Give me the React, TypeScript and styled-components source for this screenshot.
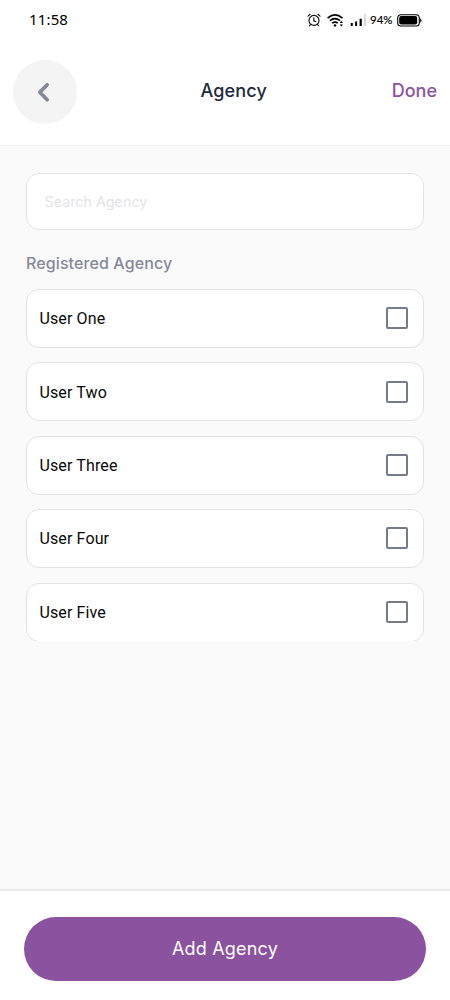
import React, { useState } from 'react';
import styled, { createGlobalStyle } from 'styled-components';

const GlobalStyle = createGlobalStyle`
  *, *::before, *::after { box-sizing: border-box; }
  body { margin: 0; background: #fff; }
  button, input { font: inherit; }
`;

const Screen = styled.div`
  width: 450px;
  height: 1000px;
  display: flex;
  flex-direction: column;
  background: #fff;
  overflow: hidden;
  font-family: Inter, sans-serif;
`;

const StatusBar = styled.div`
  height: 40px;
  flex: none;
  display: flex;
  align-items: center;
  justify-content: space-between;
  padding: 0 28px 0 29px;
  color: #000;
`;

const Clock = styled.span`
  font: 400 15px/20px 'Noto Sans', sans-serif;
  letter-spacing: 0.15px;
  margin-top: -2px;
`;

const StatusIcons = styled.div`
  display: flex;
  align-items: center;
  gap: 5px;
  svg { display: block; }
`;

const BatteryLevel = styled.span`
  font: 400 11.5px/16px Lato, sans-serif;
  width: 24px;
  margin: 0 -2px 0 -2px;
  -webkit-text-stroke: 0.15px #000;
  white-space: nowrap;
`;

const Header = styled.header`
  height: 106px;
  flex: none;
  display: grid;
  grid-template-columns: 1fr auto 1fr;
  padding: 20px 13px 0 13px;
  border-bottom: 1px solid #f3f3f3;
`;

const BackButton = styled.button`
  width: 64px;
  height: 64px;
  padding: 0;
  border: 0;
  border-radius: 50%;
  background: #f4f4f4;
  svg { display: block; }
`;

const Title = styled.h1`
  margin: 17px 0 0;
  padding-left: 17px;
  width: 84px;
  margin-right: -1px;
  white-space: nowrap;
  font-size: 18px;
  line-height: 28px;
  font-weight: 500;
  letter-spacing: 0.15px;
  color: #20293a;
`;

const DoneButton = styled.button`
  justify-self: end;
  align-self: start;
  margin-top: 17px;
  padding: 0;
  border: 0;
  background: none;
  font-size: 18px;
  line-height: 28px;
  font-weight: 500;
  color: #8e529f;
`;

const Content = styled.main`
  flex: 1;
  min-height: 0;
  background: #fafafa;
  padding: 27px 26px 0;
`;

const SearchField = styled.input`
  display: block;
  width: 398px;
  height: 57px;
  padding: 0 18px 1px 17.5px;
  border: 1px solid #e3e3e6;
  border-radius: 13px;
  background: #fff;
  outline: none;
  font-size: 14.3px;
  &::placeholder { color: #e4e4e6; opacity: 1; }
`;

const SectionTitle = styled.h2`
  margin: 21px 0 14px;
  font-size: 16px;
  line-height: 24px;
  font-weight: 500;
  letter-spacing: 0.1px;
  color: #85899a;
`;

const AgencyList = styled.div`
  width: 398px;
  height: 352px;
  display: flex;
  flex-direction: column;
  gap: 14.4px;
  overflow: hidden;
`;

const AgencyRow = styled.label`
  flex: none;
  height: 59px;
  display: flex;
  align-items: center;
  justify-content: space-between;
  padding: 0 15px 0 12.5px;
  border: 1px solid #e3e3e6;
  border-radius: 13px;
  background: #fff;
  font: 400 16px/24px Roboto, sans-serif;
  letter-spacing: 0.12px;
  color: #080808;
`;

const AgencyName = styled.span`
  padding-top: 1.4px;
`;

const Checkbox = styled.input`
  appearance: none;
  width: 22px;
  height: 22px;
  margin: 0 0 0.4px;
  border: 2px solid #747b8b;
  border-radius: 2px;
  &:checked { background: #8e529f; }
`;

const Footer = styled.footer`
  flex: none;
  height: 111px;
  border-top: 2px solid #ebebeb;
  padding: 26px 24px 0;
`;

const AddButton = styled.button`
  display: block;
  width: 402px;
  height: 64px;
  border: 0;
  padding: 0 0 2px;
  border-radius: 32px;
  background: #8b529f;
  color: #fff;
  font-size: 18px;
  font-weight: 400;
  letter-spacing: 0.18px;
`;

const AlarmIcon = () => (
  <svg width="14" height="14" viewBox="0 0 14 14" fill="none" stroke="#111" strokeWidth="1.15" strokeLinecap="round">
    <circle cx="7" cy="7.4" r="5" />
    <path d="M6.8 4.8v3l2 .8M1 3.1l2-1.8M13 3.1l-2-1.8M3.5 11.6l-.9 1.1M10.5 11.6l.9 1.1" />
  </svg>
);

const WifiIcon = () => (
  <svg width="18" height="15" viewBox="-0.8 0 18 15" fill="none" stroke="#000" strokeWidth="1.6">
    <path d="M.8 5.1Q8.2-1.4 15.7 5.1M3.1 7.7q5.1-4.3 10.2 0M5.4 10.2q2.8-2.2 5.6 0" />
    <circle cx="8.2" cy="12.4" r="1.2" fill="#000" stroke="none" />
    <path d="M12.8 10 14.5 8l1.7 2ZM12.8 11.4l1.7 2 1.7-2Z" fill="#000" stroke="none" />
  </svg>
);

const SignalIcon = () => (
  <svg width="18" height="14" viewBox="-1 0 18 14">
    <path d="M.8 10h2v3h-2zM5.1 8.6h2V13h-2zM9.6 5.8h2.2V13H9.6z" fill="#000" />
    <path d="M14.1 1.2h1.8V13h-1.8z" fill="#d5d5d5" />
  </svg>
);

const BatteryIcon = () => (
  <svg width="25" height="13" viewBox="0 0 25 13">
    <rect x=".7" y=".7" width="21.6" height="11.3" rx="3.3" fill="#fff" stroke="#000" strokeWidth="1.1" />
    <rect x="2.2" y="2.1" width="18" height="8.5" rx="2" fill="#000" />
    <path d="M23.2 4.2q1.2.2 1.2 2.2t-1.2 2.2z" fill="#000" />
  </svg>
);

const AGENCIES = ['User One', 'User Two', 'User Three', 'User Four', 'User Five'];

export default function App() {
  const [query, setQuery] = useState('');
  return (
    <>
      <GlobalStyle />
      <Screen>
        <StatusBar>
          <Clock>11:58</Clock>
          <StatusIcons>
            <AlarmIcon />
            <WifiIcon />
            <SignalIcon />
            <BatteryLevel>94%</BatteryLevel>
            <BatteryIcon />
          </StatusIcons>
        </StatusBar>
        <Header>
          <BackButton aria-label="Back">
            <svg width="64" height="64" viewBox="0 0 64 64" fill="none" stroke="#858896" strokeWidth="3.7" strokeLinecap="round" strokeLinejoin="round">
              <path d="M34.2 24.7 26.8 32.2l7.4 7.5" />
            </svg>
          </BackButton>
          <Title>Agency</Title>
          <DoneButton>Done</DoneButton>
        </Header>
        <Content>
          <SearchField placeholder="Search Agency" value={query} onChange={(e) => setQuery(e.target.value)} />
          <SectionTitle>Registered Agency</SectionTitle>
          <AgencyList>
            {AGENCIES.map((name) => (
              <AgencyRow key={name}>
                <AgencyName>{name}</AgencyName>
                <Checkbox type="checkbox" />
              </AgencyRow>
            ))}
          </AgencyList>
        </Content>
        <Footer>
          <AddButton>Add Agency</AddButton>
        </Footer>
      </Screen>
    </>
  );
}
